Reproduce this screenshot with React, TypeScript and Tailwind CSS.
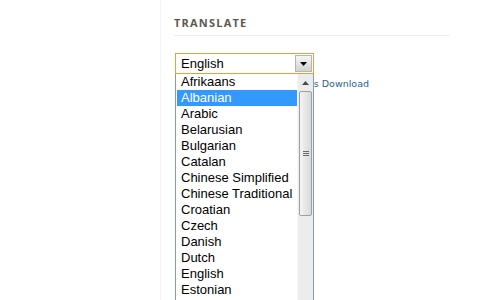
import React from "react";

const langs = [
  "Afrikaans",
  "Albanian",
  "Arabic",
  "Belarusian",
  "Bulgarian",
  "Catalan",
  "Chinese Simplified",
  "Chinese Traditional",
  "Croatian",
  "Czech",
  "Danish",
  "Dutch",
  "English",
  "Estonian",
  "Filipino",
];

export default function App() {
  return (
    <div className="w-[500px] h-[300px] overflow-hidden bg-white flex">
      <div className="w-[160px] shrink-0" />
      <div className="w-[340px] border-l border-[#f4f4f4] pl-[13px] pr-[50px] flex flex-col">
        <div
          className="pt-[18px] pb-[7px] border-b border-[#eeeeee] text-[11px] font-bold tracking-[1.2px] leading-[10px] text-[#5e5852]"
          style={{ fontFamily: "'Open Sans', 'DejaVu Sans', sans-serif" }}
        >
          TRANSLATE
        </div>
        <div className="relative mt-[17px] w-[139px] ml-[1px]">
          <div
            className="h-[21px] border border-[#e0a43e] bg-white flex items-center justify-between pl-[5px] pr-[1px] text-[13px] text-black"
            style={{ fontFamily: "'Liberation Sans', Arial, sans-serif" }}
          >
            <span className="leading-[16px]">English</span>
            <div className="w-[17px] h-[17px] border border-[#b5b5b5] bg-gradient-to-b from-[#f6f6f6] to-[#d2d2d2] flex items-center justify-center">
              <svg width="7" height="4" viewBox="0 0 7 4">
                <path d="M0 0 H7 L3.5 4 Z" fill="#000" />
              </svg>
            </div>
          </div>
          <div className="mt-[4px] w-[195px] ml-[-1px] flex justify-end">
            <span
              className="text-[9.5px] leading-[12px] text-[#1f5f97] whitespace-nowrap"
              style={{ fontFamily: "'DejaVu Sans', Verdana, sans-serif" }}
            >
              Translate Languages Download
            </span>
          </div>
          <div
            className="absolute left-0 top-[21px] w-[139px] h-[260px] bg-white border-x border-[#7f9db9] flex"
            style={{ fontFamily: "'Liberation Sans', Arial, sans-serif" }}
          >
            <div className="flex-1 flex flex-col pl-[1px] overflow-hidden">
              {langs.map((l) => (
                <div
                  key={l}
                  className={
                    "h-[16px] shrink-0 pl-[4px] text-[13px] leading-[16px] whitespace-nowrap " +
                    (l === "Albanian" ? "bg-[#3399ff] text-white" : "text-black")
                  }
                >
                  {l}
                </div>
              ))}
            </div>
            <div className="w-[16px] shrink-0 bg-[#ececec] border-l border-[#f7f7f7] flex flex-col">
              <div className="h-[17px] flex items-center justify-center">
                <svg width="7" height="4" viewBox="0 0 7 4">
                  <path d="M0 4 H7 L3.5 0 Z" fill="#4a4a4a" />
                </svg>
              </div>
              <div className="h-[125px] mx-[1px] rounded-[2px] border border-[#9f9f9f] bg-gradient-to-r from-[#f5f5f5] to-[#d9d9d9] flex flex-col items-center justify-center gap-[1px]">
                <div className="w-[6px] h-px bg-[#6a6a6a]" />
                <div className="w-[6px] h-px bg-[#6a6a6a]" />
                <div className="w-[6px] h-px bg-[#6a6a6a]" />
              </div>
            </div>
          </div>
        </div>
      </div>
    </div>
  );
}
